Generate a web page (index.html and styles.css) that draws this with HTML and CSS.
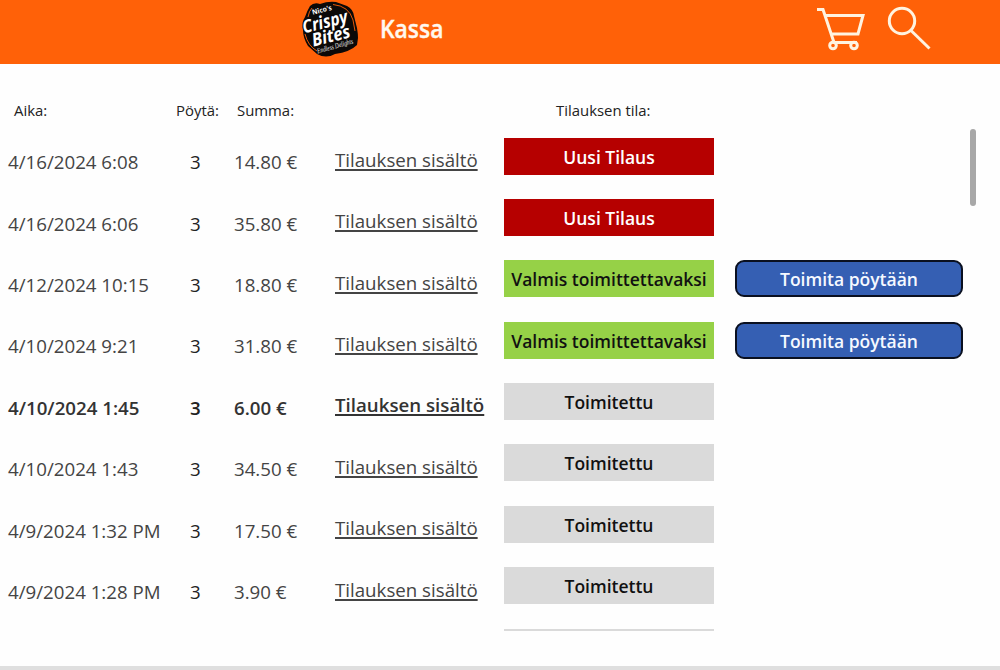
FILE: index.html
```html
<!DOCTYPE html>
<html lang="fi">
<head>
<meta charset="utf-8">
<title>Kassa</title>
<link rel="stylesheet" href="styles.css">
</head>
<body>
<div class="app">
<header class="topbar">
  <svg class="logo" viewBox="0 0 60 60" role="img" aria-label="Nico's Crispy Bites">
    <path class="badge-shape" d="M10 6Q14 2 20 4Q28 1 36 2L47 6Q53 9 54 16L57 28Q58 34 58 38L57 45Q50 52 35 54Q26 59 17 54L8 46Q3 38 3 30Q1 23 5 17Q7 11 10 6Z"/>
    <path class="badge-ring" d="M33 4.500Q49 6 53 20L55 31M5 34Q8 46 17 51M8 17Q9 11 12 8"/>
    <g transform="rotate(-14 30 30)">
      <text class="logo-small" x="17" y="11" textLength="20" lengthAdjust="spacingAndGlyphs">Nico's</text>
      <text class="logo-big" x="4" y="27" textLength="46" lengthAdjust="spacingAndGlyphs">Crispy</text>
      <text class="logo-big" x="10" y="42" textLength="39" lengthAdjust="spacingAndGlyphs">Bites</text>
    </g>
    <text class="logo-script" transform="rotate(-16 18 54)" x="18" y="53.500" textLength="37" lengthAdjust="spacingAndGlyphs">Endless Delights</text>
  </svg>
  <h1 class="title">Kassa</h1>
  <svg class="icon cart" viewBox="0 0 50 44">
    <path d="M0 2.500H6L17 35.500H40M8.500 8.500H46L41 27H14.500"/>
    <circle cx="16" cy="38.500" r="3.300"/><circle cx="37" cy="38.500" r="3.300"/>
  </svg>
  <svg class="icon search" viewBox="0 0 44 44">
    <circle cx="15" cy="15" r="12.700"/><path d="M24 24.500L42.500 42.500"/>
  </svg>
</header>
<div class="columns head">
  <span class="h-time">Aika:</span><span class="h-table">Pöytä:</span><span class="h-sum">Summa:</span><span></span><span class="h-state">Tilauksen tila:</span>
</div>
<main class="content">
  <div class="orders">
    <div class="columns row"><span class="time">4/16/2024 6:08</span><span class="table">3</span><span class="sum">14.80 €</span><a class="link">Tilauksen sisältö</a><span class="state new">Uusi Tilaus</span></div>
    <div class="columns row"><span class="time">4/16/2024 6:06</span><span class="table">3</span><span class="sum">35.80 €</span><a class="link">Tilauksen sisältö</a><span class="state new">Uusi Tilaus</span></div>
    <div class="columns row"><span class="time">4/12/2024 10:15</span><span class="table">3</span><span class="sum">18.80 €</span><a class="link">Tilauksen sisältö</a><span class="state ready">Valmis toimittettavaksi</span><button class="deliver">Toimita pöytään</button></div>
    <div class="columns row"><span class="time">4/10/2024 9:21</span><span class="table">3</span><span class="sum">31.80 €</span><a class="link">Tilauksen sisältö</a><span class="state ready">Valmis toimittettavaksi</span><button class="deliver">Toimita pöytään</button></div>
    <div class="columns row selected"><span class="time">4/10/2024 1:45</span><span class="table">3</span><span class="sum">6.00 €</span><a class="link">Tilauksen sisältö</a><span class="state">Toimitettu</span></div>
    <div class="columns row"><span class="time">4/10/2024 1:43</span><span class="table">3</span><span class="sum">34.50 €</span><a class="link">Tilauksen sisältö</a><span class="state">Toimitettu</span></div>
    <div class="columns row"><span class="time">4/9/2024 1:32 PM</span><span class="table">3</span><span class="sum">17.50 €</span><a class="link">Tilauksen sisältö</a><span class="state">Toimitettu</span></div>
    <div class="columns row"><span class="time">4/9/2024 1:28 PM</span><span class="table">3</span><span class="sum">3.90 €</span><a class="link">Tilauksen sisältö</a><span class="state">Toimitettu</span></div>
    <div class="columns row"><span></span><span></span><span></span><span></span><span class="state"></span></div>
  </div>
  <div class="scroll-thumb"></div>
</main>
<footer class="bottom-bar"></footer>
</div>
</body>
</html>
```

FILE: styles.css
```css
* { box-sizing: border-box; }
body { margin: 0; background: #fefefe; font-family: "Open Sans", sans-serif; color: #222; }
.app { display: flex; flex-direction: column; width: 1000px; height: 670px; overflow: hidden; }
.topbar { display: flex; align-items: flex-start; flex: none; height: 64px; padding-left: 300px; background: #ff6108; }
.logo { width: 60px; height: 60px; overflow: visible; }
.badge-shape { fill: #0b0908; }
.badge-ring { fill: none; stroke: #ff6108; stroke-width: 0.9; }
.logo-small { fill: #fff; font: 700 7px "Open Sans", sans-serif; }
.logo-big { fill: #fff; font: italic 700 18px "Open Sans", sans-serif; }
.logo-script { fill: #eee; font: italic 7.500px "Liberation Serif", serif; }
.title { width: 90px; margin: 9px 0 0 20px; color: #fff8ee; font-size: 26px; line-height: 38px; font-weight: 600; -webkit-text-stroke: 0.4px #fff8ee; transform: scaleX(0.88); transform-origin: left; }
.icon { fill: none; stroke: #fff3e0; stroke-width: 3; }
.cart { width: 50px; height: 44px; margin: 7px 0 0 347px; }
.search { width: 44px; height: 44px; margin: 6px 0 0 20px; }
.columns { display: grid; grid-template-columns: 168px 58px 101px 169px 210px 228px; padding-left: 8px; align-items: start; }
.columns .deliver { margin-left: 21px; }
.head { flex: none; height: 64.700px; padding-top: 35px; font-size: 14.900px; line-height: 22px; }
.h-time { padding-left: 6px; }
.h-sum { padding-left: 3px; }
.h-state { padding-left: 52px; }
.content { display: flex; flex: none; height: 502.300px; overflow: hidden; }
.orders { width: 970px; flex: none; padding-top: 9px; }
.row { height: 61.370px; font-size: 18.700px; line-height: 26px; color: #444; white-space: nowrap; }
.time, .table, .sum { padding-top: 11.700px; }
.table { padding-left: 14px; color: #222; }
.link { margin-top: 9.300px; text-decoration: underline; text-decoration-thickness: 1.500px; text-underline-offset: 1.500px; text-decoration-skip-ink: none; }
.selected { font-weight: 600; color: #333; }
.state { height: 37px; background: #dadada; color: #111; font-size: 17.500px; line-height: 38.500px; font-weight: 600; text-align: center; }
.state.new { background: #b60000; color: #fff; }
.state.ready { background: #96d147; }
.deliver { width: 228px; height: 37px; padding: 1px 0 0; border: 2px solid #0a1020; border-radius: 9px; background: #355fb3; color: #f6f9ff; font: 600 17.500px/32px "Open Sans", sans-serif; }
.scroll-thumb { width: 6px; height: 77px; border-radius: 3px; background: #a8a8a8; }
.bottom-bar { height: 4px; margin-top: auto; background: #dfdfdf; }
```
